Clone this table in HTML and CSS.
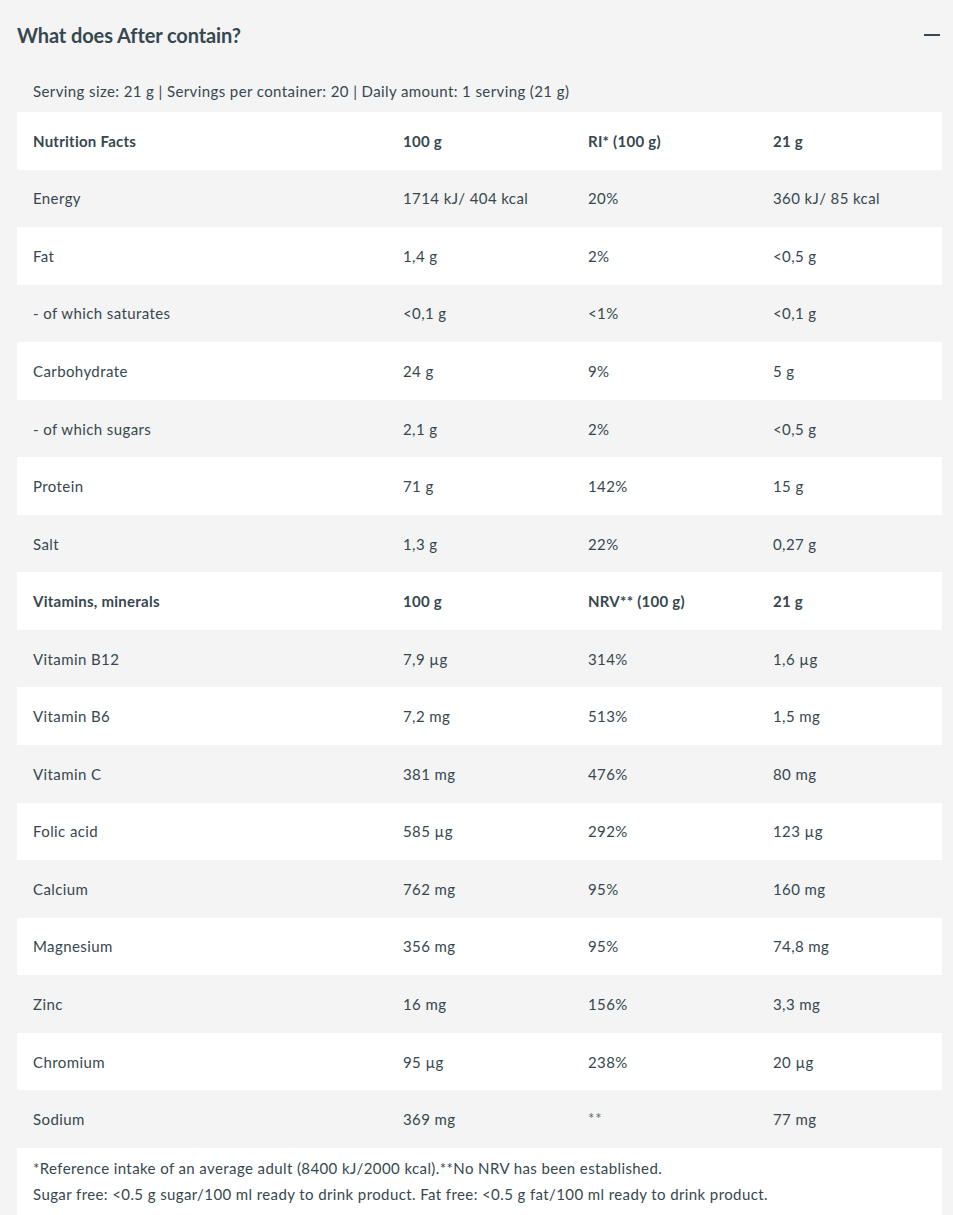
FILE: index.html
```html
<!DOCTYPE html>
<html>
<head>
<meta charset="utf-8">
<link rel="stylesheet" href="styles.css">
</head>
<body>
<div class="page">
  <div class="header">
    <h2 class="title">What does After contain?</h2>
    <span class="minus"></span>
  </div>
  <div class="serving">Serving size: 21 g | Servings per container: 20 | Daily amount: 1 serving (21 g)</div>
  <div class="table">
    <div class="row head"><span>Nutrition Facts</span><span>100 g</span><span>RI* (100 g)</span><span>21 g</span></div>
    <div class="row"><span>Energy</span><span>1714 kJ/ 404 kcal</span><span>20%</span><span>360 kJ/ 85 kcal</span></div>
    <div class="row"><span>Fat</span><span>1,4 g</span><span>2%</span><span>&lt;0,5 g</span></div>
    <div class="row"><span>- of which saturates</span><span>&lt;0,1 g</span><span>&lt;1%</span><span>&lt;0,1 g</span></div>
    <div class="row"><span>Carbohydrate</span><span>24 g</span><span>9%</span><span>5 g</span></div>
    <div class="row"><span>- of which sugars</span><span>2,1 g</span><span>2%</span><span>&lt;0,5 g</span></div>
    <div class="row"><span>Protein</span><span>71 g</span><span>142%</span><span>15 g</span></div>
    <div class="row"><span>Salt</span><span>1,3 g</span><span>22%</span><span>0,27 g</span></div>
    <div class="row head"><span>Vitamins, minerals</span><span>100 g</span><span>NRV** (100 g)</span><span>21 g</span></div>
    <div class="row"><span>Vitamin B12</span><span>7,9 µg</span><span>314%</span><span>1,6 µg</span></div>
    <div class="row"><span>Vitamin B6</span><span>7,2 mg</span><span>513%</span><span>1,5 mg</span></div>
    <div class="row"><span>Vitamin C</span><span>381 mg</span><span>476%</span><span>80 mg</span></div>
    <div class="row"><span>Folic acid</span><span>585 µg</span><span>292%</span><span>123 µg</span></div>
    <div class="row"><span>Calcium</span><span>762 mg</span><span>95%</span><span>160 mg</span></div>
    <div class="row"><span>Magnesium</span><span>356 mg</span><span>95%</span><span>74,8 mg</span></div>
    <div class="row"><span>Zinc</span><span>16 mg</span><span>156%</span><span>3,3 mg</span></div>
    <div class="row"><span>Chromium</span><span>95 µg</span><span>238%</span><span>20 µg</span></div>
    <div class="row"><span>Sodium</span><span>369 mg</span><span class="stars">**</span><span>77 mg</span></div>
  </div>
  <div class="footer">
    <p>*Reference intake of an average adult (8400 kJ/2000 kcal).**No NRV has been established.</p>
    <p>Sugar free: &lt;0.5 g sugar/100 ml ready to drink product. Fat free: &lt;0.5 g fat/100 ml ready to drink product.</p>
  </div>
</div>
</body>
</html>
```

FILE: styles.css
```css
html, body {
  margin: 0;
  padding: 0;
  background: #f4f4f4;
}
body {
  font-family: Lato, "Open Sans", sans-serif;
  color: #37474f;
  font-size: 15px;
  letter-spacing: 0.4px;
}
.page {
  padding: 0 11px 0 17px;
}
.header {
  height: 70px;
  display: flex;
  align-items: center;
  justify-content: space-between;
}
.title {
  margin: 0;
  font-size: 20px;
  font-weight: 700;
  letter-spacing: -0.1px;
  color: #37474f;
}
.minus {
  display: block;
  width: 16px;
  height: 2.5px;
  background: #37474f;
  margin-right: 2px;
}
.serving {
  height: 42px;
  line-height: 42px;
  padding-left: 16px;
}
.table {
  display: flex;
  flex-direction: column;
}
.row {
  display: grid;
  grid-template-columns: 40% 20% 20% 20%;
  height: 57.55px;
  align-items: center;
}
.row:nth-child(odd) {
  background: #ffffff;
}
.row span {
  padding-left: 16px;
}
.row.head {
  font-weight: 700;
  letter-spacing: 0.25px;
}
.stars {
  font-size: 15px;
  color: #5f6e76;
  position: relative;
  top: -1px;
  letter-spacing: 1px;
}
.footer {
  background: #ffffff;
  padding: 7px 16px 8px;
}
.footer p {
  margin: 0;
  line-height: 26px;
}
```
